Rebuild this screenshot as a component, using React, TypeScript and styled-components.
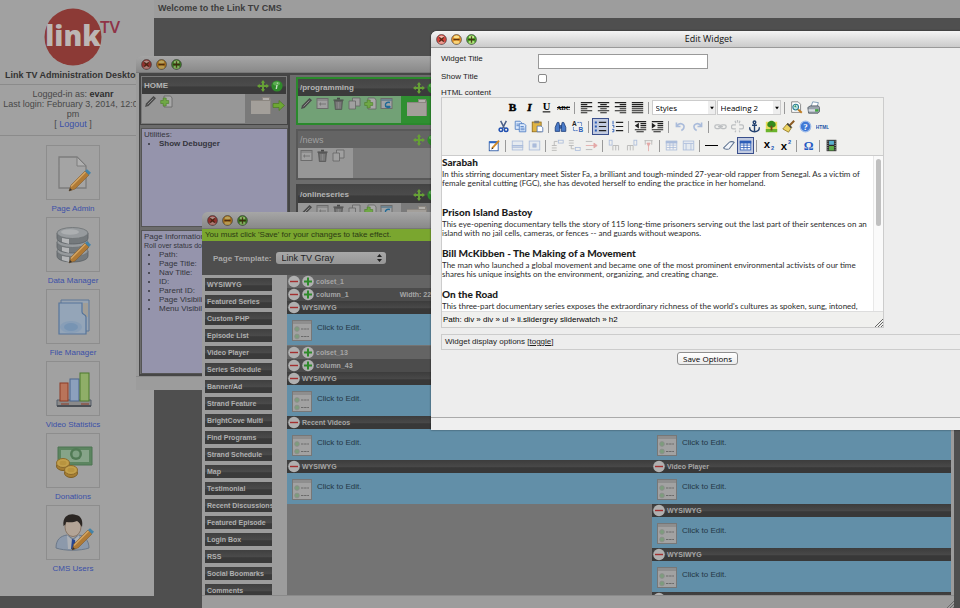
import React from "react";
import styled, { createGlobalStyle, css } from "styled-components";

const Global = createGlobalStyle`
  * { box-sizing: border-box; }
  html, body, #root { height: 100%; }
  body {
    margin: 0;
    overflow: hidden;
    background: #4f4f4f;
    font-family: "Liberation Sans", Arial, sans-serif;
    font-size: 9px;
    color: #333;
  }
  ul, p, h1, h2, h3 { margin: 0; padding: 0; }
  ul { list-style: none; }
  button, input, select { font: inherit; color: inherit; margin: 0; padding: 0; }
  button { background: none; border: 0; cursor: pointer; }
  a { color: #3b50a8; text-decoration: none; }
  svg { display: block; flex: none; }
`;

/* ---------- page shell ---------- */

const Desktop = styled.div`
  position: relative;
  display: flex;
  align-items: flex-start;
  height: 100vh;
  overflow: hidden;
`;

const Sidebar = styled.nav`
  flex: none;
  width: 154px;
  height: calc(100vh - 12px);
  padding-right: 8px;
  background: #a1a1a1;
  text-align: center;
  overflow: hidden;
`;

const Brand = styled.header`
  display: flex;
  flex-direction: column;
  align-items: center;
  height: 85px;
  padding-top: 8px;
  border-bottom: 1px solid #8b8b8b;
`;

const BrandTitle = styled.h1`
  margin-top: 2px;
  font-size: 9px;
  line-height: 12px;
  font-weight: bold;
  white-space: nowrap;
`;

const Session = styled.div`
  height: 51px;
  padding-top: 4px;
  font-size: 9px;
  line-height: 10px;
  color: #484848;
  border-bottom: 1px solid #8b8b8b;
  b { color: #2e2e2e; }
`;

const Apps = styled.ul`
  padding-top: 9px;
`;

const AppLink = styled.a`
  display: flex;
  flex-direction: column;
  align-items: center;
  height: 72px;
  font-size: 8px;
  line-height: 17px;
`;

const AppTile = styled.span`
  display: flex;
  align-items: center;
  justify-content: center;
  width: 54px;
  height: 55px;
  border: 1px solid #8d8d8d;
`;

const Welcome = styled.header`
  flex: 1;
  height: 18px;
  padding: 0 4px;
  background: #9d9d9d;
  font-size: 9px;
  line-height: 17px;
  font-weight: bold;
  color: #3c3c3c;
`;

/* ---------- windows ---------- */

const Win = styled.section<{ $tone: "dim" | "lit" }>`
  position: absolute;
  display: flex;
  flex-direction: column;
  overflow: hidden;
  border-radius: 6px 6px 0 0;
  background: ${(p) => (p.$tone === "lit" ? "#ededed" : "#9c9c9c")};
`;

const PagesWin = styled(Win)`
  left: 136px;
  top: 56px;
  right: 240px;
  height: 334px;
`;
const LayoutWin = styled(Win)`
  left: 202px;
  top: 212px;
  right: 6px;
  bottom: -4px;
`;
const EditWin = styled(Win)`
  left: 431px;
  top: 31px;
  right: -26px;
  height: 399px;
  box-shadow: 0 0 2px rgba(0, 0, 0, 0.6);
`;

const TitleBar = styled.header<{ $tone: "dim" | "lit" }>`
  display: flex;
  align-items: center;
  gap: 4px;
  flex: none;
  height: 17px;
  padding: 0 5px;
  border-bottom: 1px solid ${(p) => (p.$tone === "lit" ? "#9a9a9a" : "#777")};
  background: ${(p) =>
    p.$tone === "lit"
      ? "linear-gradient(#f4f4f4, #cbcbcb)"
      : "linear-gradient(#a6a6a6, #898989)"};
`;

const TitleText = styled.h2`
  flex: 1;
  margin-right: 45px;
  font: 9px/16px "Open Sans", sans-serif;
  text-align: center;
  color: #111;
`;

const Light = styled.button`
  width: 11px;
  height: 11px;
`;

type LightKind = "close" | "minimize" | "zoom";
const lightFill: Record<"dim" | "lit", Record<LightKind, [string, string]>> = {
  lit: { close: ["#d8433c", "#f3b4a8"], minimize: ["#ee9a2c", "#fbe28c"], zoom: ["#4faa2e", "#c6ee8e"] },
  dim: { close: ["#91302c", "#b08a84"], minimize: ["#a8721f", "#b9a35c"], zoom: ["#3c7a24", "#8fb56a"] },
};
const lightMark: Record<LightKind, string> = {
  close: "M3.2 3.2l4.6 4.6M7.8 3.2l-4.6 4.6",
  minimize: "M2.4 5.5h6.2",
  zoom: "M2.2 5.5h6.6M5.5 2.2v6.6",
};

function Lights({ tone }: { tone: "dim" | "lit" }) {
  return (
    <>
      {(["close", "minimize", "zoom"] as LightKind[]).map((k) => {
        const [c, hi] = lightFill[tone][k];
        return (
          <Light key={k} aria-label={k}>
            <svg width="11" height="11" viewBox="0 0 11 11">
              <circle cx="5.5" cy="5.5" r="4.9" fill={c} stroke="#3b3b3b" strokeOpacity=".75" strokeWidth=".9" />
              <ellipse cx="5.5" cy="3" rx="2.8" ry="1.5" fill={hi} />
              <ellipse cx="5.5" cy="8.2" rx="3" ry="1.6" fill={hi} opacity=".8" />
              <path d={lightMark[k]} stroke="#3a1c08" strokeOpacity=".8" strokeWidth="1.3" />
            </svg>
          </Light>
        );
      })}
    </>
  );
}

/* ---------- small drawings ---------- */

const Pencil = () => (
  <g>
    <path d="M13 31l2-6L29 11l4 4L19 29z" fill="#b07a35" stroke="#7d5c34" strokeWidth=".6" />
    <path d="M15 26.500L29.500 12" stroke="#d3a565" strokeWidth="1.400" />
    <path d="M29 11l2-1.800 4 3.600-2 2.200z" fill="#4383a8" />
    <path d="M13 31l1-3 2 2z" fill="#333" />
  </g>
);

function AppIcon({ kind }: { kind: string }) {
  return (
    <svg width="42" height="42" viewBox="0 0 42 42">
      {kind === "page" && (
        <g>
          <path d="M7 5h18l9 9v22H7z" fill="#a4a4a4" stroke="#7c7c7c" strokeWidth="1.300" />
          <path d="M25 5v9h9z" fill="#b0b0b0" stroke="#7c7c7c" />
          <g transform="translate(4 8)"><Pencil /></g>
        </g>
      )}
      {kind === "data" && (
        <g>
          {[27, 18, 9].map((y) => (
            <g key={y}>
              <path d={`M5 ${y}v5c0 8 31 8 31 0v-5z`} fill="#74797c" stroke="#5c6164" strokeWidth=".8" />
              <path d={`M10 ${y + 5}v4l7 2v-5z`} fill="#b4b6b8" />
              <ellipse cx="20.500" cy={y} rx="15.500" ry="5.500" fill="#979b9e" stroke="#6c7174" strokeWidth=".8" />
              <ellipse cx="18" cy={y - 1} rx="9" ry="2.800" fill="#acafb1" />
            </g>
          ))}
          <g transform="translate(4 8)"><Pencil /></g>
        </g>
      )}
      {kind === "file" && (
        <g>
          <path d="M9 4h28v31H9z" fill="#98a4b2" stroke="#5d7797" strokeWidth="1" />
          <path d="M31 7h5v14h-5z" fill="#a19e97" />
          <path d="M7 7h23v9c0 3 4 2 4 5v17H7z" fill="#94a5b8" stroke="#56759a" strokeWidth="1.200" />
          <ellipse cx="19" cy="31" rx="11" ry="6" fill="#7b97b6" opacity=".5" />
          <ellipse cx="19" cy="31" rx="7" ry="4" fill="#6d8db0" opacity=".6" />
        </g>
      )}
      {kind === "stats" && (
        <g>
          <path d="M5 32h34v6H5z" fill="#8a8a8a" stroke="#555e6a" />
          <rect x="8" y="15" width="8" height="18" fill="#b9745a" stroke="#8e3b24" />
          <rect x="18" y="11" width="9" height="22" fill="#8ca0bd" stroke="#4b658c" />
          <rect x="28" y="5" width="9" height="28" fill="#8fae68" stroke="#4c7a2c" />
          <path d="M5 38h34" stroke="#4b4f55" strokeWidth="2" />
          <path d="M9 36h8M29 36h8" stroke="#8e3b24" />
        </g>
      )}
      {kind === "money" && (
        <g>
          <path d="M6 7h34v18H6z" fill="#5c8560" stroke="#4c7452" />
          <path d="M9 10h28v12H9z" fill="#86a489" />
          <circle cx="24" cy="14" r="6" fill="#517a55" />
          <circle cx="24" cy="14" r="3.500" fill="#7fa083" />
          {[[11, 24], [19, 31]].map(([x, y]) => (
            <g key={x}>
              <ellipse cx={x} cy={y + 2} rx="6.500" ry="4.500" fill="#a67e33" stroke="#7e5f24" />
              <ellipse cx={x} cy={y - 1} rx="6.500" ry="4.500" fill="#c3a04b" stroke="#8b6a2c" />
              <ellipse cx={x} cy={y - 1} rx="3.500" ry="2.200" fill="#b8943f" />
            </g>
          ))}
        </g>
      )}
      {kind === "users" && (
        <g>
          <path d="M4 36c0-9 5-12 11-13l6 4 6-4c5 1 10 5 10 13-9 3-24 3-33 0z" fill="#8c99ab" stroke="#6b7889" />
          <path d="M15 23l6 6 6-6-1 14H16z" fill="#adb0b5" />
          <path d="M20 27l3 1 1 9h-5z" fill="#27458f" />
          <ellipse cx="21" cy="15" rx="8" ry="9.500" fill="#b3a496" stroke="#7f6a58" strokeWidth=".8" />
          <path d="M11.500 14C10 3 19 1 24 3c6 1 7 7 6 12-2-3-3-5-5-6-4 2-9 1-11 1 0 2-1 3-2.500 4z" fill="#2b2623" />
          <g transform="translate(7 7)"><Pencil /></g>
        </g>
      )}
    </svg>
  );
}

const Plus4 = () => (
  <svg width="12" height="12" viewBox="0 0 12 12">
    <path d="M6 0l2.200 2.700H7v2.300h2.300V3.800L12 6 9.300 8.200V7H7v2.300h1.200L6 12 3.800 9.300H5V7H2.700v1.200L0 6l2.700-2.200V5H5V2.700H3.800z" fill="#66a036" />
  </svg>
);
const Info = () => (
  <svg width="12" height="12" viewBox="0 0 12 12">
    <circle cx="6" cy="6" r="5.600" fill="#2f8a2b" />
    <ellipse cx="5.500" cy="3.500" rx="3.500" ry="2" fill="#5cad52" />
    <path d="M6.600 2.600l-.2 1M6 5L5.300 9" stroke="#c9dcc6" strokeWidth="1.400" />
  </svg>
);
const Folder = () => (
  <svg width="22" height="19" viewBox="0 0 22 19">
    <path d="M1 18V4h11V1h8l1 3v14z" fill="#8b8680" />
    <path d="M1 18V5h19v13z" fill="#a39f9a" />
    <path d="M13 2h6v2h-6z" fill="#b2afab" />
  </svg>
);
const GreenArrow = () => (
  <svg width="13" height="11" viewBox="0 0 13 11">
    <path d="M1 3.500h6V.5l5.500 5-5.500 5v-3H1z" fill="#6da734" stroke="#4a7a22" strokeWidth=".7" />
  </svg>
);

function RowIcon({ kind }: { kind: string }) {
  return (
    <svg width="13" height="13" viewBox="0 0 13 13">
      {kind === "edit" && (
        <g>
          <path d="M1 12l1-3.500L9.500 1l2.500 2.300L4.500 11z" fill="#4b4b4b" />
          <path d="M3.500 9.500l6-6" stroke="#8b8b8b" />
        </g>
      )}
      {kind === "rename" && (
        <g>
          <rect x="1" y="1.500" width="11" height="10" fill="#a0a0a0" stroke="#6c6c6c" />
          <path d="M1 3h11M3 7h7M4.500 5.500v3" stroke="#777" />
        </g>
      )}
      {kind === "trash" && (
        <g>
          <path d="M2.500 4h8l-.8 8.500H3.300z" fill="#6d6d6d" stroke="#4a4a4a" strokeWidth=".6" />
          <path d="M1.500 3.200h10M5 1.500h3" stroke="#4a4a4a" strokeWidth="1.300" />
          <path d="M5 5v6.500M6.500 5v6.500M8 5v6.500" stroke="#9b9b9b" strokeWidth=".6" />
        </g>
      )}
      {kind === "copy" && (
        <g fill="#a0a0a0" stroke="#666" strokeWidth=".8">
          <path d="M4.500 1H12v8H4.500z" />
          <path d="M1 4h6.500v8H1z" />
        </g>
      )}
      {kind === "add" && (
        <g>
          <path d="M4 1h6.500L12 3v9H4z" fill="#a8a8a8" stroke="#666" strokeWidth=".8" />
          <path d="M3.200 3h3v2.500h2.500v3H6.200V11h-3V8.500H.7v-3h2.500z" fill="#6fa845" stroke="#4b7e2a" strokeWidth=".6" />
        </g>
      )}
      {kind === "web" && (
        <g>
          <rect x="1" y="1.500" width="11" height="10" fill="#a0a3a5" stroke="#6c6c6c" />
          <path d="M1 3h11" stroke="#5f7a8a" strokeWidth="1.500" />
          <path d="M10 5.500c-3-1-5 1-4.500 3s3 3 5 1M5 9.500h5" stroke="#1e6a96" strokeWidth="1.400" fill="none" />
        </g>
      )}
    </svg>
  );
}

/* ---------- site tree window ---------- */

const Tree = styled.div`
  display: flex;
  flex: 1;
  min-height: 0;
  margin-left: 3px;
  gap: 6px;
  background: #6c6c6c;
  border: 1px solid #464646;
  border-width: 2px 0 2px 1px;
`;
const TreeLeft = styled.div`
  display: flex;
  flex-direction: column;
  flex: none;
  width: 150px;
  border-right: 2px solid #444;
  gap: 3px;
`;
const TreeRight = styled.div`
  display: flex;
  flex-direction: column;
  flex: 1;
  gap: 4px;
  padding-top: 2px;
`;
const NodeBox = styled.article<{ $state: "home" | "active" | "hidden" | "idle" }>`
  flex: none;
  display: flex;
  flex-direction: column;
  height: 48px;
  border: 2px solid #444;
  background: #7a7a7a;
  ${(p) => p.$state === "home" && css`height: 50px; padding: 1px; border-width: 1px;`}
  ${(p) => p.$state === "active" && css`border-color: #2a8a2c; background: #2f8f31;`}
  ${(p) => p.$state === "hidden" && css`border-color: #585858; height: 51px; background: #7c7c7c;`}
`;
const NodeHead = styled.header<{ $faded?: boolean }>`
  display: flex;
  align-items: center;
  gap: 2px;
  flex: none;
  height: 17px;
  padding: 0 2px;
  font-size: 8px;
  font-weight: ${(p) => (p.$faded ? "normal" : "bold")};
  color: ${(p) => (p.$faded ? "#a0a0a0" : "#b4b4b4")};
  background: ${(p) =>
    p.$faded ? "#646464" : "linear-gradient(#454545 0, #4b4b4b 50%, #3b3b3b 60%)"};
  span { width: 111px; font-size: ${(p) => (p.$faded ? "9px" : "8px")}; }
`;
const NodeBody = styled.div`
  display: flex;
  flex: 1;
`;
const NodeTools = styled.div<{ $wide: number; $tint?: string }>`
  display: flex;
  gap: 3px;
  width: ${(p) => p.$wide}px;
  padding: 1px 2px;
  background: ${(p) => p.$tint || "#979797"};
`;
const IconButton = styled.button`
  display: block;
  height: 13px;
`;
const NodeNav = styled.div`
  display: flex;
  align-items: flex-start;
  padding: 2px 0 0 5px;
  svg + svg { margin-top: 4px; }
`;
const InfoPanel = styled.div<{ $grow?: boolean }>`
  flex: ${(p) => (p.$grow ? "1" : "0 0 99px")};
  margin-left: 1px;
  padding: 1px 2px;
  border: 1px solid #555;
  background: #9594ac;
  color: #34343c;
  font-size: 8px;
  line-height: 9px;
  white-space: nowrap;
  overflow: hidden;
  ul { padding-left: 15px; list-style: disc; }
  small { font-size: 7px; }
`;
const WinFoot = styled.footer`
  flex: none;
  height: 14px;
  border-top: 1px solid #8a8a8a;
  background: #9c9c9c;
`;

const allTools = ["edit", "rename", "trash", "copy", "add", "web"];

function TreeNode({ name, state, tools, nav }: { name: string; state: "home" | "active" | "hidden" | "idle"; tools: string[]; nav?: boolean }) {
  const home = state === "home";
  return (
    <NodeBox $state={state}>
      <NodeHead $faded={state === "hidden"}>
        <span>{name}</span>
        <Plus4 />
        <Info />
      </NodeHead>
      <NodeBody>
        <NodeTools $wide={state === "hidden" ? 55 : 103} $tint={state === "active" ? "#72a176" : undefined}>
          {tools.map((t) => (
            <IconButton key={t} aria-label={t}><RowIcon kind={t} /></IconButton>
          ))}
        </NodeTools>
        {nav && (
          <NodeNav>
            <Folder />
            {home && <GreenArrow />}
          </NodeNav>
        )}
      </NodeBody>
    </NodeBox>
  );
}

function SiteTree() {
  return (
    <PagesWin $tone="dim" aria-label="Pages">
      <TitleBar $tone="dim"><Lights tone="dim" /></TitleBar>
      <Tree>
        <TreeLeft>
          <TreeNode name="HOME" state="home" tools={["edit", "add"]} nav />
          <InfoPanel>
            Utilities:
            <ul><li><b>Show Debugger</b></li></ul>
          </InfoPanel>
          <InfoPanel $grow>
            Page Information:<br />
            <small>Roll over status dots</small>
            <ul>
              {["Path:", "Page Title:", "Nav Title:", "ID:", "Parent ID:", "Page Visibility:", "Menu Visibility:"].map((t) => (
                <li key={t}>{t}</li>
              ))}
            </ul>
          </InfoPanel>
        </TreeLeft>
        <TreeRight>
          <TreeNode name="/programming" state="active" tools={allTools} nav />
          <TreeNode name="/news" state="hidden" tools={["rename", "trash", "copy"]} />
          <TreeNode name="/onlineseries" state="idle" tools={allTools} nav />
        </TreeRight>
      </Tree>
      <WinFoot />
    </PagesWin>
  );
}

/* ---------- page layout window ---------- */

const Notice = styled.p`
  flex: none;
  height: 12px;
  padding-left: 3px;
  background: #7aa62f;
  color: #2c3a14;
  font-size: 8px;
  line-height: 12px;
`;
const TemplateBar = styled.div`
  display: flex;
  align-items: center;
  gap: 4px;
  flex: none;
  height: 34px;
  padding-left: 11px;
  background: #4e4e4e;
  color: #a8a8a8;
  font-size: 8px;
  label { font-weight: bold; }
`;
const SelectWrap = styled.span<{ $w: number }>`
  position: relative;
  display: block;
  width: ${(p) => p.$w}px;
  svg { position: absolute; right: 4px; top: 50%; transform: translateY(-50%); pointer-events: none; }
`;
const TemplateSelect = styled.select`
  display: block;
  appearance: none;
  width: 100%;
  height: 12px;
  padding-left: 6px;
  border: 0;
  border-radius: 3px;
  background: linear-gradient(#a8a8a8, #969696);
  color: #1f1f1f;
  font-size: 9px;
`;
const LayoutBody = styled.div`
  display: flex;
  flex: 1;
  min-height: 0;
  padding-right: 3px;
`;
const Palette = styled.ul`
  display: flex;
  flex-direction: column;
  flex: none;
  gap: 4px;
  width: 85px;
  padding: 3px 15px 0 3px;
  overflow: hidden;
`;
const PaletteItem = styled.button`
  display: block;
  width: 100%;
  height: 13px;
  padding-left: 2px;
  overflow: hidden;
  border: 0;
  background: linear-gradient(#404040 0, #4a4a4a 50%, #3a3a3a 60%);
  color: #b0b0b0;
  font-size: 7px;
  line-height: 13px;
  font-weight: bold;
  text-align: left;
  white-space: nowrap;
`;
const Canvas = styled.div`
  flex: 1;
  min-width: 0;
  overflow: hidden;
  background: #747474;
`;
const Row = styled.div`
  display: flex;
`;
const LeftCol = styled.div`
  flex: 365;
`;
const RightCol = styled.div`
  flex: 299;
  padding-top: 57px;
`;
const Bar = styled.div<{ $kind: "colset" | "column" | "widget" }>`
  display: flex;
  align-items: center;
  gap: 2px;
  height: 13px;
  padding-left: 1px;
  color: #a6a6a6;
  font-size: 7px;
  font-weight: bold;
  background: ${(p) =>
    ({
      colset: "#646464",
      column: "#4c4c4c",
      widget: "linear-gradient(#3c3c3c 0, #484848 50%, #383838 60%)",
    })[p.$kind]};
`;
const SecondColset = styled.div`
  padding-top: 1px;
`;
const WidthNote = styled.span`
  margin-left: 49px;
`;
const WidgetBody = styled.div`
  display: flex;
  gap: 5px;
  height: 31px;
  padding: 6px 0 0 5px;
  background: #628fa8;
  color: #243744;
  font-size: 8px;
  line-height: 15px;
`;

const Round = ({ plus }: { plus?: boolean }) => (
  <IconButton aria-label={plus ? "add" : "remove"}>
    <svg width="12" height="13" viewBox="0 0 12 13">
      <circle cx="6" cy="6.500" r="5.800" fill="#b0b0b0" />
      {plus ? (
        <path d="M6 2.500v8M2 6.500h8" stroke="#2f8a2b" strokeWidth="2" />
      ) : (
        <path d="M2 6.500h8" stroke="#a32f2f" strokeWidth="1.400" />
      )}
    </svg>
  </IconButton>
);

function Widget({ name }: { name?: string }) {
  return (
    <>
      <Bar $kind="widget"><Round />{name}</Bar>
      <WidgetBody>
        <svg width="20" height="21" viewBox="0 0 20 21">
          <rect x=".5" y=".5" width="19" height="20" fill="#a2a2a2" stroke="#777" />
          <path d="M1 2.500h18" stroke="#8e8e8e" strokeWidth="3" />
          <g fill="#7d9c7d" stroke="#8d8d8d" strokeWidth=".8">
            <circle cx="5" cy="9" r="2.400" />
            <circle cx="5" cy="16.500" r="2.400" />
          </g>
          <path d="M9 9h8M9 16.500h8" stroke="#6a6a6a" strokeDasharray="2.500 .6" />
        </svg>
        Click to Edit.
      </WidgetBody>
    </>
  );
}

const paletteNames = [
  "WYSIWYG", "Featured Series", "Custom PHP", "Episode List", "Video Player", "Series Schedule",
  "Banner/Ad", "Strand Feature", "BrightCove Multi", "Find Programs", "Strand Schedule", "Map",
  "Testimonial", "Recent Discussions", "Featured Episode", "Login Box", "RSS", "Social Boomarks", "Comments",
];

const LayoutFoot = styled(WinFoot)`
  display: flex;
  justify-content: flex-end;
  height: 17px;
  padding-top: 5px;
`;

function LayoutEditor() {
  return (
    <LayoutWin $tone="dim" aria-label="Page layout">
      <TitleBar $tone="dim"><Lights tone="dim" /></TitleBar>
      <Notice>You must click 'Save' for your changes to take effect.</Notice>
      <TemplateBar>
        <label htmlFor="template">Page Template:</label>
        <SelectWrap $w={110}>
          <TemplateSelect id="template"><option>Link TV Gray</option></TemplateSelect>
          <svg width="5" height="8" viewBox="0 0 5 8"><path d="M0 3l2.500-3L5 3zM0 5l2.500 3L5 5z" fill="#222" /></svg>
        </SelectWrap>
      </TemplateBar>
      <LayoutBody>
        <Palette>
          {paletteNames.map((n) => <li key={n}><PaletteItem>{n}</PaletteItem></li>)}
        </Palette>
        <Canvas>
          <Bar $kind="colset"><Round /><Round plus />colset_1</Bar>
          <Bar $kind="column"><Round /><Round plus />column_1<WidthNote>Width: 220</WidthNote></Bar>
          <Widget name="WYSIWYG" />
          <SecondColset>
            <Bar $kind="colset"><Round /><Round plus />colset_13</Bar>
            <Row>
              <LeftCol>
                <Bar $kind="column"><Round /><Round plus />column_43</Bar>
                <Widget name="WYSIWYG" />
                <Widget name="Recent Videos" />
                <Widget name="WYSIWYG" />
              </LeftCol>
              <RightCol>
                <Widget />
                <Widget name="Video Player" />
                <Widget name="WYSIWYG" />
                <Widget name="WYSIWYG" />
                <Bar $kind="widget"><Round /></Bar>
              </RightCol>
            </Row>
          </SecondColset>
        </Canvas>
      </LayoutBody>
      <LayoutFoot>
        <svg width="8" height="8" viewBox="0 0 8 8"><path d="M0 8l8-8M3 8l5-5M6 8l2-2" stroke="#6b6b6b" /></svg>
      </LayoutFoot>
    </LayoutWin>
  );
}

/* ---------- edit widget window ---------- */

const Form = styled.form`
  display: flex;
  flex-direction: column;
  flex: 1;
  padding: 6px 12px 0 10px;
  color: #222;
  font-size: 8px;
`;
const Field = styled.div`
  display: flex;
  align-items: flex-start;
  height: 18px;
  line-height: 9px;
  label { width: 97px; }
`;
const TitleInput = styled.input`
  width: 170px;
  height: 15px;
  border: 1px solid #999;
  background: #fff;
`;
const Check = styled.input`
  appearance: none;
  width: 9px;
  height: 9px;
  margin-top: 2px;
  border: 1px solid #888;
  border-radius: 2px;
  background: #fff;
`;
const ContentLabel = styled.div`
  height: 7px;
  line-height: 5px;
`;
const Editor = styled.div`
  flex: none;
  width: 443px;
  border: 1px solid #ccc;
  background: #f0f0ee;
`;
const Toolbar = styled.div`
  display: flex;
  flex-direction: column;
  border-bottom: 1px solid #ccc;
`;
const ToolRow = styled.div`
  display: flex;
  align-items: center;
  justify-content: center;
  height: 19px;
`;
const ToolButton = styled.button<{ $on?: boolean; $off?: boolean }>`
  display: flex;
  align-items: center;
  justify-content: center;
  width: 17px;
  height: 17px;
  opacity: ${(p) => (p.$off ? 0.35 : 1)};
  ${(p) => p.$on && css`border: 1px solid #3a4f8c; background: #c2cbe0;`}
`;
const Divider = styled.span`
  width: 2px;
  height: 12px;
  margin: 0 2px;
  border-left: 1px solid #999;
`;
const ToolSelect = styled.select`
  display: block;
  appearance: none;
  width: 100%;
  height: 15px;
  padding-left: 3px;
  border: 1px solid #ccc;
  border-radius: 0;
  background: linear-gradient(#eee, #eee) right / 7px 100% no-repeat #fff;
  color: #000;
  font-family: "Open Sans", sans-serif;
  font-size: 8px;
`;
const Slim = styled(SelectWrap)`
  margin-right: 1px;
  svg { right: 2px; }
`;
const Page = styled.div`
  display: flex;
  height: 155px;
  background: #fff;
`;
const Prose = styled.div`
  flex: 1;
  overflow: hidden;
  outline: 0;
  white-space: nowrap;
  font-family: Lato, sans-serif;
  color: #2b2b2b;
  h3 { font-size: 10px; line-height: 12px; font-weight: 900; color: #1c1c1c; }
  p { padding-top: 2px; font-size: 8px; line-height: 9px; }
  section { height: 41px; }
  section:first-child { height: 50px; }
`;
const Track = styled.div`
  width: 10px;
  padding: 3px 2px;
  border-left: 1px solid #e8e8e8;
  background: #fafafa;
`;
const Thumb = styled.div`
  height: 67px;
  border-radius: 3px;
  background: #c0c0c0;
`;
const PathBar = styled.div`
  display: flex;
  align-items: flex-end;
  justify-content: space-between;
  height: 16px;
  padding-left: 1px;
  border-top: 1px solid #ddd;
  line-height: 15px;
  color: #000;
`;
const OptionsBox = styled.div`
  flex: none;
  height: 16px;
  margin-top: 6px;
  padding-left: 3px;
  border: 1px solid #ccc;
  line-height: 14px;
  a { color: #222; text-decoration: underline; }
`;
const SaveButton = styled.button`
  align-self: center;
  height: 13px;
  margin-top: 2px;
  padding: 0 5px;
  border: 1px solid #8f8f8f;
  border-radius: 3px;
  background: linear-gradient(#fff, #ececec);
  color: #000;
  font-family: "Open Sans", sans-serif;
  font-size: 8px;
  line-height: 11px;
`;
const EditFoot = styled.footer`
  flex: none;
  height: 13px;
  border-top: 1px solid #aaa;
  background: #efefef;
`;

const S = "#222";
const B = "#2b5db8";
const glyph = (t: string, extra: React.SVGProps<SVGTextElement>) => (
  <text x="8" y="12.500" textAnchor="middle" fill="#000" fontFamily="Liberation Serif, serif" fontWeight="bold" fontSize="14" {...extra}>{t}</text>
);
const lines = (d: string) => <path d={d} stroke={S} strokeWidth="1.400" fill="none" />;
const grid = (
  <g>
    <rect x="1.500" y="2.500" width="13" height="11" fill="#fff" stroke={B} />
    <path d="M1 4h14" stroke={B} strokeWidth="3" />
    <path d="M2 7.500h12M2 10.500h12M6 5v8M10 5v8" stroke={B} />
  </g>
);

const icons: Record<string, React.ReactNode> = {
  bold: glyph("B", { stroke: "#000", strokeWidth: 0.6 }),
  italic: glyph("I", { fontStyle: "italic", stroke: "#000", strokeWidth: 0.6 }),
  underline: glyph("U", { textDecoration: "underline", fontSize: 13, y: 11.5 }),
  strike: (<g>{glyph("ABC", { fontSize: 8, y: 11 })}<path d="M0 8h16" stroke="#000" strokeWidth="1.200" /></g>),
  left: lines("M1 2h14M1 4.500h8M1 7h14M1 9.500h8M1 12h14M1 14.500h8"),
  center: lines("M1 2h14M4 4.500h8M1 7h14M4 9.500h8M1 12h14M4 14.500h8"),
  right: lines("M1 2h14M7 4.500h8M1 7h14M7 9.500h8M1 12h14M7 14.500h8"),
  justify: lines("M1 2h14M1 4.500h14M1 7h14M1 9.500h14M1 12h14M1 14.500h14"),
  preview: (
    <g>
      <path d="M2 1h8l3 3v10H2z" fill="#fff" stroke="#777" />
      <circle cx="7" cy="7.500" r="3.500" fill="#bfe3ea" stroke="#2b7f8f" strokeWidth="1.300" />
      <path d="M5 7l2-2 1 3z" fill="#3f9d4d" />
      <path d="M10 10.500l4.500 4" stroke="#c07d22" strokeWidth="2.400" />
    </g>
  ),
  print: (
    <g>
      <path d="M5 7l2-6 7 1-2 6z" fill="#fff" stroke="#6c8fae" />
      <path d="M1 8l3-2h10l1.500 2v5l-2 2H2z" fill="#9aa3ad" stroke="#4b555f" />
      <path d="M2 10h8v3H2z" fill="#d7dde3" />
      <path d="M10 10h4v3h-4z" fill="#3faa3a" />
    </g>
  ),
  cut: (
    <g fill="none" strokeWidth="1.800">
      <path d="M4.500 1l4.500 9M11.500 1L7 10" stroke="#4a5f88" />
      <circle cx="4.800" cy="12" r="2.200" stroke="#1f4fb0" />
      <circle cx="11.200" cy="12" r="2.200" stroke="#1f4fb0" />
    </g>
  ),
  copy: (
    <g fill="#dbe9fb" stroke="#4878c0">
      <path d="M1.500 1.500h6l2 2v8h-8z" /><path d="M6.500 4.500h6l2 2v8h-8z" />
      <path d="M8 8h4M8 10h5M8 12h5M3 5h3M3 7h3" />
    </g>
  ),
  paste: (
    <g>
      <rect x="1.500" y="2.500" width="11" height="12" fill="#e0b443" stroke="#8d6818" />
      <path d="M4 1h6v3H4z" fill="#777" />
      <path d="M7.500 7.500h5l2 2v5h-7z" fill="#fff" stroke="#4a6fae" />
    </g>
  ),
  find: (
    <g fill="#4a7bc8" stroke="#1e3c78">
      <path d="M1.500 14V9L4 3h2l1 5v6zM14.500 14V9L12 3h-2L9 8v6z" /><path d="M7 7h2v3H7z" />
    </g>
  ),
  replace: (
    <g>
      <text x="4" y="7" fontSize="8" fontWeight="bold" textAnchor="middle" fill="#222">A</text>
      <text x="12" y="15" fontSize="8" fontWeight="bold" textAnchor="middle" fill={B}>B</text>
      <path d="M8 3h5v4M3 9v4h5" stroke={B} strokeWidth="1.200" strokeDasharray="1.500 1" fill="none" />
    </g>
  ),
  ul: (<g>{lines("M6 3h9M6 8h9M6 13h9")}<path d="M1 3h2.500M1 8h2.500M1 13h2.500" stroke={B} strokeWidth="2.500" /></g>),
  ol: (<g>{lines("M6 3h9M6 8h9M6 13h9")}<path d="M2.500 1v4M1.500 6.500h2v3M1.500 11.500h2v3h-2" stroke={B} strokeWidth="1.200" fill="none" /></g>),
  outdent: (<g>{lines("M1 2h14M8 4.500h7M8 7h7M8 9.500h7M1 12h14M3 14.500h9")}<path d="M1 7l5-3.500v7z" fill={S} /></g>),
  indent: (<g>{lines("M1 2h14M8 4.500h7M8 7h7M8 9.500h7M1 12h14M3 14.500h9")}<path d="M6 7L1 3.500v7z" fill={S} /></g>),
  undo: <path d="M3 3v5h5M3.500 7.500C7 2 14 5 12 10c-.5 1.500-2 2.500-3 3" fill="none" stroke={B} strokeWidth="2" />,
  redo: <path d="M13 3v5H8M12.500 7.500C9 2 2 5 4 10c.5 1.500 2 2.500 3 3" fill="none" stroke={B} strokeWidth="2" />,
  link: (<g fill="none" stroke="#5d6670" strokeWidth="1.600"><rect x="1" y="6" width="7" height="4.500" rx="2.200" /><rect x="8" y="6" width="7" height="4.500" rx="2.200" /><path d="M5 8.200h6" /></g>),
  unlink: (<g fill="none" stroke="#5d6670" strokeWidth="1.500"><path d="M6 6H3a2.200 2.200 0 0 0 0 5h3M10 6h3a2.200 2.200 0 0 1 0 5h-3M5 1l1 3M8 0v3M11 1l-1 3M5 15l1-2M11 15l-1-2" /></g>),
  anchor: (<g fill="none" stroke="#22406f" strokeWidth="1.700"><circle cx="8" cy="2.800" r="1.600" /><path d="M8 4.500V14M5 6.500h6M2 9c0 4 3 5.500 6 5.500S14 13 14 9" /></g>),
  image: (<g><path d="M1 2h14v12H1z" fill="#e7dc5a" /><path d="M1 11h14v4H1z" fill="#6bb42c" /><path d="M3 7c-1-4 3-6 5-6s6 2 5 6c-1 3-9 3-10 0z" fill="#338a1c" /><path d="M8 7v6" stroke="#7a4a18" strokeWidth="2.200" /></g>),
  cleanup: (<g><path d="M15 1L9 7" stroke="#8a5a20" strokeWidth="2.400" /><path d="M7 4l5 5-4 6-7-4z" fill="#ecd463" stroke="#8d7421" /><path d="M6.500 4.500l5 5" stroke="#444" strokeWidth="2" /></g>),
  help: (<g><circle cx="8" cy="8" r="6.500" fill="#3e78d6" stroke="#9dbbe8" strokeWidth="1.500" />{glyph("?", { fill: "#fff", fontSize: 11, y: 12 })}</g>),
  html: glyph("HTML", { fontFamily: "Liberation Sans, sans-serif", fontSize: 6, fill: "#1c55a8", y: 10.5 }),
  edit: (<g><rect x="1.500" y="3.500" width="11" height="11" fill="#fff" stroke="#1f4fa0" /><path d="M1.500 4h11" stroke="#2e68c4" strokeWidth="2.500" /><path d="M5 11.500L13.500 2" stroke="#d08a28" strokeWidth="2.400" /><path d="M4 13l1-2.500 1.500 1.200z" fill="#222" /></g>),
  rowprops: (<g stroke={B} fill="#d5e2f6"><rect x="1.500" y="2.500" width="13" height="11" /><path d="M1 8h14M1 10h14" strokeWidth="1.500" /></g>),
  cellprops: (<g stroke={B} fill="#d5e2f6"><rect x="1.500" y="2.500" width="13" height="11" /><rect x="6" y="6" width="4" height="4" fill={B} /></g>),
  rowbefore: (<g stroke="#444" fill="none"><path d="M1 8h6M1 11h6M1 14h6M4 8V3h4" /><rect x="9" y="1.500" width="6" height="3.500" stroke={B} /></g>),
  rowafter: (<g stroke="#444" fill="none"><path d="M1 2h6M1 5h6M1 8h6M4 8v4h4" /><rect x="9" y="10.500" width="6" height="3.500" stroke={B} /></g>),
  rowdel: (<g stroke="#444" fill="none"><path d="M1 3h8M1 13h8" /><path d="M1 8h11M11 5l4 3-4 3z" stroke="#c22" fill="#c22" /></g>),
  colbefore: (<g stroke="#444" fill="none"><path d="M6 14V8M9.500 14V8M13 14V8M6 8h7" /><rect x="1.500" y="1.500" width="3.500" height="6" stroke={B} /></g>),
  colafter: (<g stroke="#444" fill="none"><path d="M3 14V8M6.500 14V8M10 14V8M3 8h7" /><rect x="11" y="1.500" width="3.500" height="6" stroke={B} /></g>),
  coldel: (<g stroke="#444" fill="none"><path d="M3 2h10M4 2v5M12 2v5" /><path d="M8 15V6M6 5l2 4 2-4z" stroke="#c22" fill="#c22" /></g>),
  split: grid,
  merge: (<g stroke={B} fill="#d5e2f6"><rect x="1.500" y="2.500" width="13" height="11" /><path d="M2 5.500h12M5 5.500v8M11 5.500v8" /></g>),
  hr: <path d="M0 8h16" stroke="#000" strokeWidth="1.500" />,
  eraser: <path d="M2 11l7-7c1-1 5-1 6 0l-6 8c-1 1-6 1-7-1z" fill="#f2f5fa" stroke="#5e7390" strokeWidth="1.300" />,
  grid,
  sub: (<g>{glyph("x", { fontFamily: "Liberation Sans, sans-serif", x: 6, y: 11, fontSize: 14 })}<text x="11" y="14" fontSize="7" fontWeight="bold" fill={B}>2</text></g>),
  sup: (<g>{glyph("x", { fontFamily: "Liberation Sans, sans-serif", x: 6, y: 13, fontSize: 14 })}<text x="11" y="6" fontSize="7" fontWeight="bold" fill={B}>2</text></g>),
  omega: glyph("Ω", { fill: "#2358c4", fontSize: 15, y: 13 }),
  media: (<g><rect x="2" y="1" width="12" height="14" fill="#2c2c2c" /><path d="M5 2h6v5H5z" fill="#5ab0d0" /><path d="M5 8.500h6V14H5z" fill="#5fae48" /><path d="M3.500 2v13M12.500 2v13" stroke="#ddd" strokeDasharray="1.200 1.500" /></g>),
};

/* "|" is a divider, a leading "-" is disabled, a leading "+" is pressed */
function Tools({ names }: { names: string }) {
  return (
    <>
      {names.split(" ").map((n, i) => {
        if (n === "|") return <Divider key={i} />;
        const key = n.replace(/^[-+]/, "");
        return (
          <ToolButton key={i} type="button" aria-label={key} $on={n[0] === "+"} $off={n[0] === "-"}>
            <svg width="13" height="13" viewBox="0 0 16 16">{icons[key]}</svg>
          </ToolButton>
        );
      })}
    </>
  );
}

const Caret = () => <svg width="4" height="3" viewBox="0 0 4 3"><path d="M0 0h4L2 3z" fill="#000" /></svg>;

function EditWidget() {
  return (
    <EditWin $tone="lit" role="dialog" aria-labelledby="edit-title">
      <TitleBar $tone="lit">
        <Lights tone="lit" />
        <TitleText id="edit-title">Edit Widget</TitleText>
      </TitleBar>
      <Form onSubmit={(e) => e.preventDefault()}>
        <Field><label htmlFor="title">Widget Title</label><TitleInput id="title" /></Field>
        <Field><label htmlFor="show">Show Title</label><Check id="show" type="checkbox" /></Field>
        <ContentLabel id="content-label">HTML content</ContentLabel>
        <Editor>
          <Toolbar>
            <ToolRow>
              <Tools names="bold italic underline strike | left center right justify |" />
              <Slim $w={64}><ToolSelect aria-label="Styles"><option>Styles</option></ToolSelect><Caret /></Slim>
              <Slim $w={64}><ToolSelect aria-label="Format"><option>Heading 2</option></ToolSelect><Caret /></Slim>
              <Tools names="| preview print" />
            </ToolRow>
            <ToolRow>
              <Tools names="cut copy paste | find replace | +ul ol | outdent indent | -undo -redo | -link -unlink anchor image cleanup help html" />
            </ToolRow>
            <ToolRow>
              <Tools names="edit | -rowprops -cellprops | -rowbefore -rowafter -rowdel | -colbefore -colafter -coldel | -split -merge | hr eraser +grid | sub sup | omega | media" />
            </ToolRow>
          </Toolbar>
          <Page>
            <Prose contentEditable suppressContentEditableWarning role="textbox" aria-labelledby="content-label">
              <section>
                <h3>Sarabah</h3>
                <p>In this stirring documentary meet Sister Fa, a brilliant and tough-minded 27-year-old rapper from Senegal. As a victim of<br />female genital cutting (FGC), she has devoted herself to ending the practice in her homeland.</p>
              </section>
              <section>
                <h3>Prison Island Bastoy</h3>
                <p>This eye-opening documentary tells the story of 115 long-time prisoners serving out the last part of their sentences on an<br />island with no jail cells, cameras, or fences -- and guards without weapons.</p>
              </section>
              <section>
                <h3>Bill McKibben - The Making of a Movement</h3>
                <p>The man who launched a global movement and became one of the most prominent environmental activists of our time<br />shares his unique insights on the environment, organizing, and creating change.</p>
              </section>
              <section>
                <h3>On the Road</h3>
                <p>This three-part documentary series exposes the extraordinary richness of the world's cultures as spoken, sung, intoned,</p>
              </section>
            </Prose>
            <Track><Thumb /></Track>
          </Page>
          <PathBar>
            <span>Path: div » div » ul » li.slidergrey sliderwatch » h2</span>
            <svg width="8" height="8" viewBox="0 0 8 8"><path d="M0 8l8-8M3 8l5-5M6 8l2-2" stroke="#666" /></svg>
          </PathBar>
        </Editor>
        <OptionsBox>Widget display options [<a href="#options">toggle</a>]</OptionsBox>
        <SaveButton type="submit">Save Options</SaveButton>
      </Form>
      <EditFoot />
    </EditWin>
  );
}

/* ---------- page ---------- */

const apps = [
  ["page", "Page Admin"],
  ["data", "Data Manager"],
  ["file", "File Manager"],
  ["stats", "Video Statistics"],
  ["money", "Donations"],
  ["users", "CMS Users"],
];

export default function App() {
  return (
    <>
      <Global />
      <Desktop>
        <Sidebar>
          <Brand>
            <svg width="98" height="59" viewBox="0 0 98 59" role="img" aria-label="link TV">
              <circle cx="49" cy="29" r="28.500" fill="#8c3a36" />
              <text x="49" y="38" textAnchor="middle" fontFamily="Open Sans, sans-serif" fontWeight="800" fontSize="28" fill="#bcb6b4">link</text>
              <text x="76" y="25" fontFamily="Open Sans, sans-serif" fontWeight="600" fontSize="17" fill="#8f3347">TV</text>
            </svg>
            <BrandTitle>Link TV Administration Desktop</BrandTitle>
          </Brand>
          <Session>
            Logged-in as: <b>evanr</b><br />
            Last login: February 3, 2014, 12:01<br />pm<br />
            [ <a href="#logout">Logout</a> ]
          </Session>
          <Apps>
            {apps.map(([kind, label]) => (
              <li key={kind}>
                <AppLink href={`#${kind}`}>
                  <AppTile><AppIcon kind={kind} /></AppTile>
                  {label}
                </AppLink>
              </li>
            ))}
          </Apps>
        </Sidebar>
        <Welcome>Welcome to the Link TV CMS</Welcome>
        <SiteTree />
        <LayoutEditor />
        <EditWidget />
      </Desktop>
    </>
  );
}
